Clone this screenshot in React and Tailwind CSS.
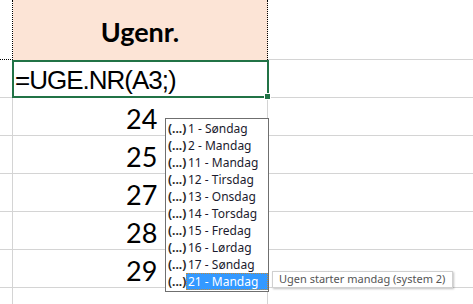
const rows = ['24', '25', '27', '28', '29', '']

const options = [
  '1 - Søndag',
  '2 - Mandag',
  '11 - Mandag',
  '12 - Tirsdag',
  '13 - Onsdag',
  '14 - Torsdag',
  '15 - Fredag',
  '16 - Lørdag',
  '17 - Søndag',
  '21 - Mandag',
]

const cellFont = { fontFamily: 'Lato, "Open Sans", sans-serif' }
const formulaFont = { fontFamily: '"Liberation Sans", Arial, sans-serif' }
const uiFont = { fontFamily: '"Noto Sans", "Open Sans", sans-serif' }

function Dots() {
  return (
    <span className="w-[18px] shrink-0 text-[12px] font-bold leading-none text-[#2a2a2a]">(...)</span>
  )
}

export default function App() {
  return (
    <div className="relative h-[304px] w-[473px] overflow-hidden bg-white" style={cellFont}>
      {/* header row */}
      <div className="flex h-[60px]">
        <div className="w-[13px] border-r border-dotted border-black border-b border-b-black" />
        <div className="flex w-[255px] items-center justify-center border-r border-dotted border-black bg-[#fce4d6] pt-1 text-[27px] font-bold text-black">
          Ugenr.
        </div>
        <div className="flex-1 border-b border-[#d4d4d4]" />
      </div>

      {/* formula row */}
      <div className="flex h-[38px]">
        <div className="w-[12px] border-b border-[#d4d4d4]" />
        <div
          className="relative w-[257px] border-2 border-[#217346] pl-[1px] pt-[1px] text-[26px] leading-[34px] tracking-[-1px] text-black"
          style={formulaFont}
        >
          =UGE.NR(A3;)
          <div className="absolute -bottom-[3px] -right-[3px] h-[5px] w-[5px] bg-[#217346] outline outline-1 outline-white" />
        </div>
        <div className="flex-1 border-b border-[#d4d4d4]" />
      </div>

      {rows.map((n, i) => (
        <div key={i} className="flex h-[38px] border-b border-[#d4d4d4]">
          <div className="w-[13px] border-r border-[#d4d4d4]" />
          <div className="flex w-[255px] items-end border-r border-[#d4d4d4] pb-[3px] pl-[113px] text-[27px] leading-none text-black">
            <span className="w-[28px] text-right">{n}</span>
          </div>
          <div className="flex-1" />
        </div>
      ))}

      {/* autocomplete list */}
      <div
        className="absolute left-[165px] top-[118px] w-[104px] border border-[#6f6f6f] bg-white py-[1px] pl-[2px]"
        style={uiFont}
      >
        {options.map((o, i) => {
          const active = i === options.length - 1
          return (
            <div key={o} className="flex h-[17px] items-center">
              <Dots />
              <span
                className={
                  active
                    ? 'flex h-[17px] flex-1 items-center border border-dotted border-[#c08a3a] bg-[#3399ff] pl-[1px] text-[12px] text-white'
                    : 'pl-[2px] text-[12px] text-[#1b1b2e]'
                }
              >
                {o}
              </span>
            </div>
          )
        })}
      </div>

      {/* tooltip */}
      <div
        className="absolute left-[272px] top-[271px] flex h-[17px] w-[181px] items-center whitespace-nowrap border border-[#d0d0d0] bg-white pl-[6px] text-[11px] text-[#555] shadow-[1px_1px_2px_rgba(0,0,0,0.25)]"
        style={uiFont}
      >
        Ugen starter mandag (system 2)
      </div>
    </div>
  )
}
